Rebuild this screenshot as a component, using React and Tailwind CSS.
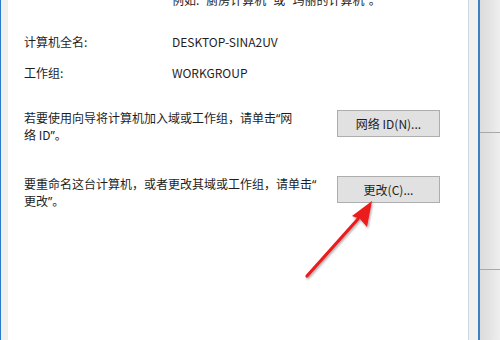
import React from "react";

function Q({ children }) {
  return <span className="font-['Noto_Sans',sans-serif] leading-none">{children}</span>;
}

export default function App() {
  return (
    <div className="relative w-[500px] h-[340px] overflow-hidden flex bg-white font-['Noto_Sans_CJK_SC','Noto_Sans',sans-serif] text-[12px] leading-[17px] text-[#1e1e1e]">
      <div className="w-px bg-[#2b79c9]" />
      <div className="w-[7px] bg-[#efefef]" />
      <div className="w-[460px] bg-white pl-[16px] flex flex-col">
        <div className="mt-[-9px] h-[17px] pl-[148px] whitespace-nowrap">
          例如: <Q>“</Q>厨房计算机<Q>”</Q> 或 <Q>“</Q>玛丽的计算机<Q>”</Q>。
        </div>
        <div className="mt-[25px] flex">
          <div className="w-[148px]">计算机全名:</div>
          <div>DESKTOP-SINA2UV</div>
        </div>
        <div className="mt-[14px] flex">
          <div className="w-[148px]">工作组:</div>
          <div>WORKGROUP</div>
        </div>
        <div className="mt-[28px] flex">
          <div className="w-[313px] whitespace-nowrap">
            若要使用向导将计算机加入域或工作组，请单击<Q>“</Q>网
            <br />
            络 ID<Q>”</Q>。
          </div>
          <button className="mt-px w-[103px] h-[27px] bg-[#e1e1e1] border border-[#adadad] text-[12px] leading-[17px] text-[#1e1e1e]">
            网络 ID(N)...
          </button>
        </div>
        <div className="mt-[32px] flex">
          <div className="w-[313px] whitespace-nowrap">
            要重命名这台计算机，或者更改其域或工作组，请单击<Q>“</Q>
            <br />
            更改<Q>”</Q>。
          </div>
          <button className="mt-px w-[103px] h-[27px] bg-[#e1e1e1] border border-[#adadad] text-[12px] leading-[17px] text-[#1e1e1e]">
            更改(C)...
          </button>
        </div>
      </div>
      <div className="w-px bg-[#cfd8e0]" />
      <div className="w-[9px] bg-[#f0f0f0]" />
      <div className="w-[2px] bg-[#3b7fc4]" />
      <div className="w-[20px] flex flex-col bg-gradient-to-r from-[#dcdcdc] via-[#e4e4e4] to-[#efefef]">
        <div className="h-[132px]" />
        <div className="h-[137px] border-t border-[#a8a8a8]" />
        <div className="flex-1 border-t border-[#a8a8a8]" />
      </div>
      <svg className="absolute left-0 top-0" width="500" height="340" viewBox="0 0 500 340">
        <defs>
          <filter id="sh" x="-20%" y="-20%" width="140%" height="140%">
            <feDropShadow dx="1" dy="1.5" stdDeviation="1" floodColor="#000" floodOpacity="0.35" />
          </filter>
        </defs>
        <g filter="url(#sh)">
          <line x1="307" y1="276" x2="358" y2="219" stroke="#ec1c1c" strokeWidth="3.2" strokeLinecap="round" />
          <polygon points="372,201 367,227 360,219 352,216" fill="#ec1c1c" />
        </g>
      </svg>
    </div>
  );
}
